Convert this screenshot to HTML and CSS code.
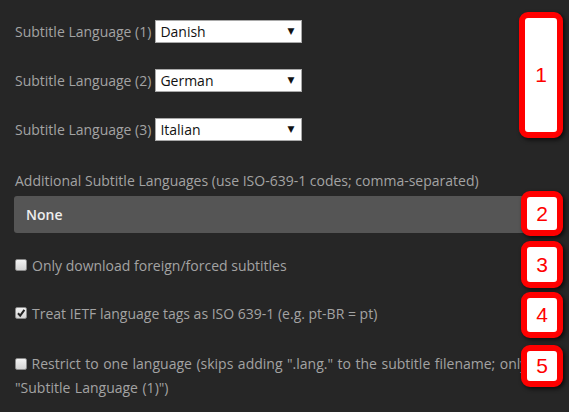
FILE: index.html
```html
<!DOCTYPE html>
<html>
<head>
<meta charset="utf-8">
<link rel="stylesheet" href="styles.css">
</head>
<body>
<div class="page">
  <div class="sel-row">
    <span class="lbl">Subtitle Language (1)</span>
    <div class="sel"><span class="sel-text">Danish</span><span class="arrow">▼</span></div>
  </div>
  <div class="sel-row">
    <span class="lbl">Subtitle Language (2)</span>
    <div class="sel"><span class="sel-text">German</span><span class="arrow">▼</span></div>
  </div>
  <div class="sel-row">
    <span class="lbl">Subtitle Language (3)</span>
    <div class="sel"><span class="sel-text">Italian</span><span class="arrow">▼</span></div>
  </div>

  <div class="add-label">Additional Subtitle Languages (use ISO-639-1 codes; comma-separated)</div>
  <div class="text-input">None</div>

  <div class="cb-row first">
    <span class="cb"></span>
    <span class="cb-text">Only download foreign/forced subtitles</span>
  </div>
  <div class="cb-row">
    <span class="cb checked"><svg viewBox="0 0 12 12" width="12" height="12"><path d="M3 6.2 L5.2 8.6 L9.4 2.8" fill="none" stroke="#222" stroke-width="2"/></svg></span>
    <span class="cb-text">Treat IETF language tags as ISO 639-1 (e.g. pt-BR = pt)</span>
  </div>
  <div class="cb-row wrap">
    <p class="cb-para"><span class="cb inline"></span> Restrict to one language (skips adding ".lang." to the subtitle filename; only uses "Subtitle Language (1)")</p>
  </div>

  <div class="badge b1">1</div>
  <div class="badge b2">2</div>
  <div class="badge b3">3</div>
  <div class="badge b4">4</div>
  <div class="badge b5">5</div>
</div>
</body>
</html>
```

FILE: styles.css
```css
html, body {
  margin: 0;
  padding: 0;
  background: #262626;
}
body {
  width: 569px;
  height: 412px;
  overflow: hidden;
  font-family: "Open Sans", "Liberation Sans", sans-serif;
  font-size: 14px;
  color: #a3a3a3;
}
.page {
  position: relative;
  padding: 20px 0 0 15px;
  height: 392px;
}
.sel-row {
  display: flex;
  align-items: center;
  gap: 4px;
  height: 23px;
  margin-bottom: 26px;
}
.lbl {
  line-height: 19px;
}
.sel {
  position: relative;
  box-sizing: border-box;
  width: 147px;
  height: 23px;
  background: #fff;
  border: 1px solid #a9a9a9;
  display: flex;
  align-items: center;
  padding-left: 4px;
  color: #111;
  font-size: 14px;
}
.arrow {
  position: absolute;
  right: 7px;
  top: 5px;
  font-size: 9px;
  color: #111;
  font-family: "DejaVu Sans", sans-serif;
}
.add-label {
  margin-top: 30px;
  line-height: 20px;
}
.text-input {
  box-sizing: border-box;
  margin-top: 5px;
  margin-left: -1px;
  width: 541px;
  height: 37px;
  background: #555555;
  border-radius: 3px;
  color: #eeeeee;
  font-size: 14px;
  font-weight: 600;
  line-height: 37px;
  padding-left: 12px;
}
.cb-row {
  display: flex;
  align-items: center;
  gap: 5px;
  height: 20px;
  margin-top: 28px;
}
.cb-row.first {
  margin-top: 22px;
}
.cb {
  box-sizing: border-box;
  width: 12px;
  height: 12px;
  border: 1px solid #8a8a8a;
  border-radius: 2px;
  background: linear-gradient(#f2f2f2, #d4d4d4);
  display: inline-block;
  position: relative;
}
.cb svg {
  position: absolute;
  left: -1px;
  top: -1px;
}
.cb.inline {
  vertical-align: -1px;
}
.cb-row.wrap {
  display: block;
  height: auto;
  margin-top: 29px;
}
.cb-para {
  margin: 0;
  width: 554px;
  line-height: 24px;
  word-spacing: 0.9px;
}
.badge {
  position: absolute;
  box-sizing: border-box;
  left: 521px;
  width: 42px;
  background: #fff;
  border: 6px solid #ff0000;
  border-radius: 9px;
  box-shadow: 2px 2px 4px rgba(0,0,0,0.7);
  color: #ff0000;
  font-family: "Liberation Sans", Arial, sans-serif;
  font-size: 21px;
  display: flex;
  align-items: center;
  justify-content: center;
}
.b1 { left: 519px; width: 44px; top: 12px; height: 126px; }
.b2 { top: 191px; height: 45px; }
.b3 { top: 241px; height: 47px; }
.b4 { top: 292px; height: 46px; }
.b5 { top: 345px; height: 42px; }
```
